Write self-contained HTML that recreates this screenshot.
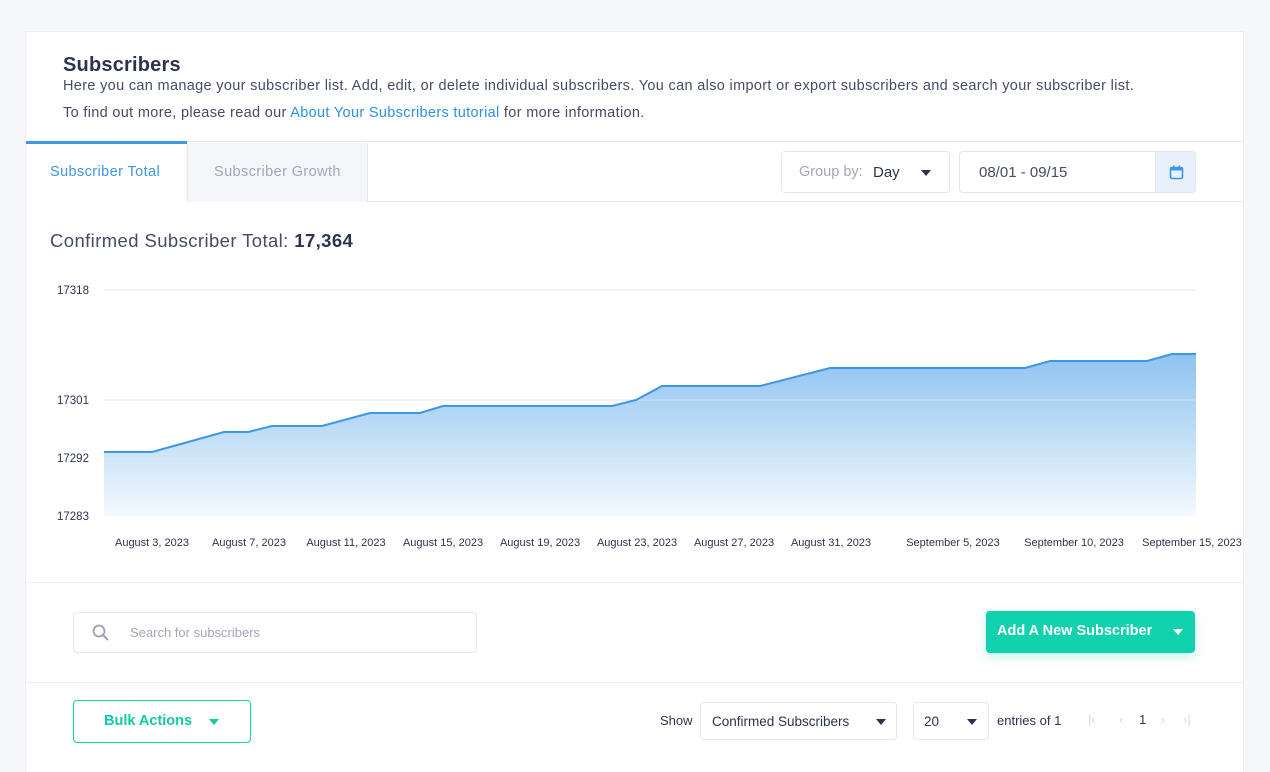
<!DOCTYPE html>
<html><head><style>
*{box-sizing:border-box;margin:0;padding:0}
body{width:1270px;height:760px;background:#f5f7fb;font-family:"Liberation Sans",sans-serif;color:#2c3350;overflow:hidden;position:relative}
.card{position:absolute;left:26px;top:32px;width:1217px;height:740px;background:#fff;box-shadow:0 0 0 1px #eceef3}
.abs{position:absolute}
.sel{position:absolute;border:1px solid #e3e6ec;border-radius:4px;background:#fff;font-size:14px}
.tri{position:absolute;width:0;height:0;border-left:5px solid transparent;border-right:5px solid transparent;border-top:6px solid #2c3350}
</style></head><body>
<div class="card">
<div class="abs" style="left:37px;top:22px;font-size:20px;font-weight:bold;color:#2c3350;letter-spacing:0.2px">Subscribers</div>
<div class="abs" style="left:37px;top:46px;font-size:14.5px;color:#454c66;letter-spacing:0.33px">Here you can manage your subscriber list. Add, edit, or delete individual subscribers. You can also import or export subscribers and search your subscriber list.</div>
<div class="abs" style="left:37px;top:73px;font-size:14.5px;color:#454c66;letter-spacing:0.33px">To find out more, please read our <span style="color:#2e90e0">About Your Subscribers tutorial</span> for more information.</div>
<div class="abs" style="left:0;top:109px;width:1217px;border-top:1px solid #e6e8ee"></div>
<div class="abs" style="left:0;top:109px;width:161px;height:3px;background:#3d96e6"></div>
<div class="abs" style="left:24px;top:132px;font-size:14.5px;color:#3d96e6;letter-spacing:0.4px">Subscriber Total</div>
<div class="abs" style="left:161px;top:111px;width:181px;height:59px;background:#f5f6f9;border-left:1px solid #e6e8ee;border-right:1px solid #e6e8ee"></div>
<div class="abs" style="left:188px;top:132px;font-size:14.5px;color:#a3a7b7;letter-spacing:0.4px">Subscriber Growth</div>
<div class="abs" style="left:342px;top:169px;width:875px;border-top:1px solid #e6e8ee"></div>
<div class="sel" style="left:755px;top:119px;width:169px;height:42px"><span class="abs" style="left:17px;top:12px;color:#a3a7b7;font-size:14.5px">Group by:</span><span class="abs" style="left:91px;top:12px;font-size:15px">Day</span><div class="tri" style="left:139px;top:18px"></div></div>
<div class="sel" style="left:933px;top:119px;width:237px;height:42px;overflow:hidden"><span class="abs" style="left:19px;top:12px;font-size:15px;color:#454c66">08/01 - 09/15</span>
<div class="abs" style="left:195px;top:0;width:42px;height:42px;background:#e8f1fb;border-left:1px solid #e3e6ec">
<svg class="abs" style="left:13px;top:13px" width="15" height="15" viewBox="0 0 15 15"><rect x="1.5" y="2.5" width="12" height="11" rx="1.5" fill="none" stroke="#3d96e6" stroke-width="1.6"/><rect x="1.5" y="2.5" width="12" height="3" fill="#3d96e6"/><rect x="4" y="0.5" width="1.5" height="3" fill="#3d96e6"/><rect x="9.5" y="0.5" width="1.5" height="3" fill="#3d96e6"/></svg></div></div>
<div class="abs" style="left:24px;top:198px;font-size:18.5px;color:#454c66;letter-spacing:0.4px">Confirmed Subscriber Total: <b style="color:#2c3350">17,364</b></div>
<div class="abs" style="left:0;top:550px;width:1217px;border-top:1px solid #eceef3"></div>
<div class="abs" style="left:0;top:650px;width:1217px;border-top:1px solid #eceef3"></div>
<div class="sel" style="left:47px;top:580px;width:404px;height:41px"><svg class="abs" style="left:18px;top:11px" width="18" height="18" viewBox="0 0 18 18"><circle cx="7" cy="7" r="5.5" fill="none" stroke="#9aa0b0" stroke-width="1.8"/><path d="M11 11l5 5" stroke="#9aa0b0" stroke-width="2"/></svg><span class="abs" style="left:56px;top:12px;font-size:13px;color:#a3a7b7">Search for subscribers</span></div>
<div class="abs" style="left:960px;top:579px;width:209px;height:42px;background:#12d1ad;border-radius:4px;box-shadow:0 4px 10px rgba(18,209,173,.25)"><span class="abs" style="left:11px;top:12px;color:#fff;font-weight:bold;font-size:14.5px">Add A New Subscriber</span><div class="tri" style="left:187px;top:18px;border-top-color:#fff"></div></div>
<div class="abs" style="left:47px;top:668px;width:178px;height:43px;border:1px solid #12d1ad;border-radius:4px"><span class="abs" style="left:30px;top:12px;color:#12c9a6;font-weight:bold;font-size:14.5px">Bulk Actions</span><div class="tri" style="left:135px;top:18px;border-top-color:#12c9a6"></div></div>
<span class="abs" style="left:634px;top:681px;font-size:13px">Show</span>
<div class="sel" style="left:674px;top:670px;width:197px;height:38px"><span class="abs" style="left:11px;top:11px;font-size:13.5px">Confirmed Subscribers</span><div class="tri" style="left:175px;top:16px"></div></div>
<div class="sel" style="left:887px;top:670px;width:76px;height:38px"><span class="abs" style="left:10px;top:11px;font-size:13.5px">20</span><div class="tri" style="left:53px;top:16px"></div></div>
<span class="abs" style="left:971px;top:681px;font-size:13px">entries of 1</span>
<span class="abs" style="left:1062px;top:680px;font-size:13px;color:#d6d9e0">|‹</span>
<span class="abs" style="left:1093px;top:680px;font-size:13px;color:#d6d9e0">‹</span>
<span class="abs" style="left:1113px;top:680px;font-size:13px">1</span>
<span class="abs" style="left:1135px;top:680px;font-size:13px;color:#d6d9e0">›</span>
<span class="abs" style="left:1157px;top:680px;font-size:13px;color:#d6d9e0">›|</span>
</div>
<svg class="abs" style="position:absolute;left:0;top:0" width="1270" height="560">
<defs><linearGradient id="g" x1="0" y1="0" x2="0" y2="1"><stop offset="0" stop-color="#8ec3f0"/><stop offset="1" stop-color="#f4f9fe"/></linearGradient></defs>
<g stroke="#e3e6ec" stroke-width="1"><line x1="104" y1="290" x2="1196" y2="290"/><line x1="104" y1="400" x2="1196" y2="400"/><line x1="104" y1="458" x2="1196" y2="458"/></g>
<path d="M104,452 L152,452 L224,432 L248,432 L272,426 L322,426 L370,413 L420,413 L443,406 L612,406 L636,400 L662,386 L760,386 L830,368 L1025,368 L1050,361 L1147,361 L1172,354 L1196,354 L1196,516 L104,516Z" fill="url(#g)"/>
<g stroke="#e3e6ec" stroke-width="1" opacity=".6"><line x1="104" y1="400" x2="1196" y2="400"/><line x1="104" y1="458" x2="1196" y2="458"/></g>
<path d="M104,452 L152,452 L224,432 L248,432 L272,426 L322,426 L370,413 L420,413 L443,406 L612,406 L636,400 L662,386 L760,386 L830,368 L1025,368 L1050,361 L1147,361 L1172,354 L1196,354" fill="none" stroke="#3d96e6" stroke-width="2"/>
<g font-family="Liberation Sans" font-size="11.5" fill="#2c3350"><text x="57" y="294">17318</text><text x="57" y="404">17301</text><text x="57" y="462">17292</text><text x="57" y="520">17283</text></g>
<g font-family="Liberation Sans" font-size="11" fill="#2c3350" text-anchor="middle"><text x="152" y="546">August 3, 2023</text><text x="249" y="546">August 7, 2023</text><text x="346" y="546">August 11, 2023</text><text x="443" y="546">August 15, 2023</text><text x="540" y="546">August 19, 2023</text><text x="637" y="546">August 23, 2023</text><text x="734" y="546">August 27, 2023</text><text x="831" y="546">August 31, 2023</text><text x="953" y="546">September 5, 2023</text><text x="1074" y="546">September 10, 2023</text><text x="1192" y="546">September 15, 2023</text></g>
</svg>
</body></html>
